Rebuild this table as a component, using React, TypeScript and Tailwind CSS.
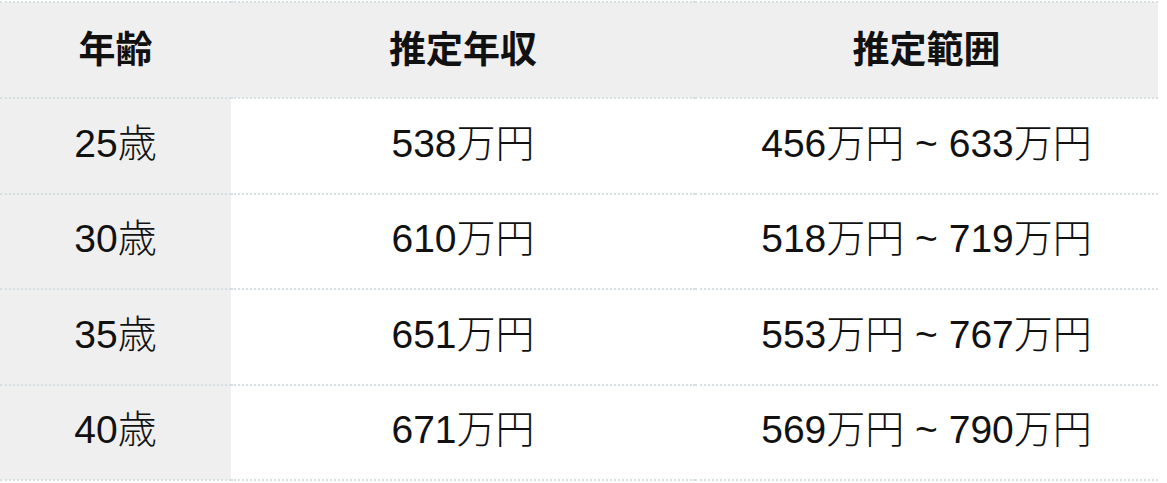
const rows = [
  { age: '25歳', income: '538万円', range: '456万円 ~ 633万円' },
  { age: '30歳', income: '610万円', range: '518万円 ~ 719万円' },
  { age: '35歳', income: '651万円', range: '553万円 ~ 767万円' },
  { age: '40歳', income: '671万円', range: '569万円 ~ 790万円' },
];

export default function App() {
  return (
    <div className="w-[1167px] h-[483px] bg-white pt-px font-['Noto_Sans_CJK_JP',sans-serif] text-[#111]">
      <table className="w-[1158px] border-collapse table-fixed">
        <colgroup>
          <col className="w-[231px]" />
          <col className="w-[464px]" />
          <col />
        </colgroup>
        <thead>
          <tr className="bg-[#efefef] border-y-2 border-dotted border-[#d6dfe2] h-[96px]">
            <th className="text-[37px] font-bold text-center pb-1">年齢</th>
            <th className="text-[37px] font-bold text-center pb-1">推定年収</th>
            <th className="text-[37px] font-bold text-center pb-1">推定範囲</th>
          </tr>
        </thead>
        <tbody className="font-['Liberation_Sans','Noto_Sans_CJK_JP',sans-serif] font-light text-[39px]">
          {rows.map((r) => (
            <tr key={r.age} className="border-b-2 border-dotted border-[#d6dfe2] h-[95.5px]">
              <td className="bg-[#efefef] text-center pb-1">{r.age}</td>
              <td className="text-center pb-1">{r.income}</td>
              <td className="text-center pb-1">{r.range}</td>
            </tr>
          ))}
        </tbody>
      </table>
    </div>
  );
}
